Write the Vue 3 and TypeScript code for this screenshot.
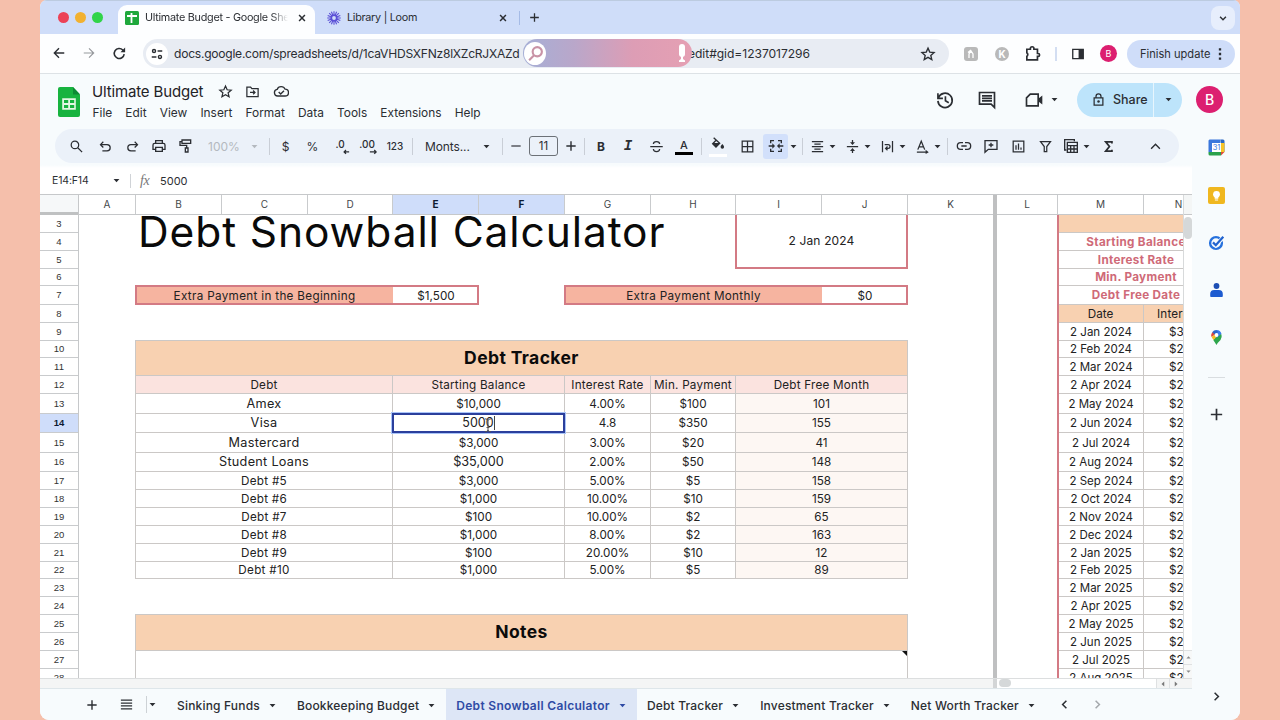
<script setup lang="ts">
import { h, type FunctionalComponent } from 'vue'

type Shape = { d: string; fill?: boolean; w?: number }

const icons: Record<string, Shape[]> = {
  back: [{ d: 'M21 12H4M12 4l-8 8 8 8', w: 2.4 }],
  forward: [{ d: 'M3 12h17M12 4l8 8-8 8', w: 2 }],
  reload: [{ d: 'M19.5 13a8 8 0 1 1-2.2-6.6L20 9', w: 2.5 }, { d: 'M21 2.5V10h-7.5z', fill: true }],
  tune: [{ d: 'M13 7h8M3 17h8', w: 2.6 }, { d: 'M4.300 7a2.600 2.600 0 1 0 5.200 0a2.600 2.600 0 1 0-5.200 0M14.500 17a2.600 2.600 0 1 0 5.200 0a2.600 2.600 0 1 0-5.200 0', w: 2.4 }],
  star: [{ d: 'M12 3.200l2.600 6 6.500.6-4.900 4.300 1.500 6.400L12 17.100l-5.700 3.400 1.500-6.400-4.900-4.300 6.500-.6z' }],
  close: [{ d: 'M5 5l14 14M19 5L5 19', w: 3.6 }],
  plus: [{ d: 'M12 4v16M4 12h16', w: 2.4 }],
  minus: [{ d: 'M4 12h16' }],
  down: [{ d: 'M5 9l7 7 7-7', w: 3.4 }],
  up: [{ d: 'M5 15.500l7-7 7 7', w: 2.2 }],
  left: [{ d: 'M15.500 5l-7 7 7 7', w: 2.8 }],
  right: [{ d: 'M8.500 5l7 7-7 7', w: 2.8 }],
  caret: [{ d: 'M2 7h20L12 18z', fill: true }],
  caretUp: [{ d: 'M2 17h20L12 6z', fill: true }],
  caretLeft: [{ d: 'M17 2v20L6 12z', fill: true }],
  caretRight: [{ d: 'M7 2v20l11-10z', fill: true }],
  puzzle: [{ d: 'M4 6h5V5a2.500 2.500 0 0 1 5 0v1h5v6h1a2 2 0 0 1 0 4h-1v5H4v-5a3 3 0 0 0 0-5z', w: 2.4 }],
  panel: [{ d: 'M3 4h18v16H3z', w: 2.3 }, { d: 'M13 4h8v16h-8z', fill: true }],
  more: [{ d: 'M10 2h4v4h-4zM10 10h4v4h-4zM10 18h4v4h-4z', fill: true }],
  move: [{ d: 'M3 5h6l2 2.500h10V20H3zM8 13.500h8M13 10.500l3 3-3 3' }],
  cloud: [{ d: 'M7 19.500a5 5 0 0 1-.8-9.900 6.500 6.500 0 0 1 12-.3 5 5 0 0 1-.2 10.200zM8.500 13.500l3 3 5-5' }],
  history: [{ d: 'M4.200 9A8.600 8.600 0 1 1 3.500 13M3.500 4v6h6M12.500 7.500V13l4 2.400' }],
  chat: [{ d: 'M3 3h18v18l-4-4H3zM6 7h12M6 10h12M6 13h12' }],
  video: [{ d: 'M7.500 5H17v14H3V9.500z' }, { d: 'M17 10.500l5-4v11l-5-4z', fill: true }],
  lock: [{ d: 'M5 9.500h14V21H5zM8 9.500V7a4 4 0 0 1 8 0v2.500' }, { d: 'M10 15.200a2 2 0 1 0 4 0a2 2 0 1 0-4 0', fill: true }],
  search: [{ d: 'M3.500 9.500a6 6 0 1 0 12 0a6 6 0 1 0-12 0M14 14l7 7' }],
  undo: [{ d: 'M8.500 4.500L4 9l4.500 4.500M4 9h10.500a5 5 0 0 1 0 10H7' }],
  redo: [{ d: 'M15.500 4.500L20 9l-4.500 4.500M20 9H9.500a5 5 0 0 0 0 10H17' }],
  print: [{ d: 'M7 8V4h10v4M6.500 17H3v-6.500Q3 8 5.500 8h13Q21 8 21 10.500V17h-3.500M7 14h10v6H7z' }],
  paint: [{ d: 'M6 3h13v5H6zM6 5.500H3V11h10v4M11 15h4v6h-4z' }],
  decLess: [{ d: 'M21 19h-8M16 16l-3 3 3 3' }],
  decMore: [{ d: 'M11 19h10M18 16l3 3-3 3' }],
  strike: [{ d: 'M2 12h20M17 8c0-3-2-4-5-4s-5 1.500-5 4M7 16c0 3 2 4 5 4s5-1.500 5-4' }],
  fill: [{ d: 'M5.500 2.500l9 8.500-5.500 5.500L4 11.500l5.500-5.500M4 11.500h10' }, { d: 'M5 11.500h9L9 16.500zM18.500 12c2 2.600 2.600 3.400 2.600 4.500a2.600 2.600 0 0 1-5.200 0c0-1.100.6-1.900 2.600-4.500z', fill: true }],
  borders: [{ d: 'M3.500 3.500h17v17h-17zM12 3.500v17M3.500 12h17' }],
  merge: [{ d: 'M9 4H4v4M15 4h5v4M9 20H4v-4M15 20h5v-4M1 12h7M23 12h-7' }, { d: 'M6.500 8l4 4-4 4zM17.500 8l-4 4 4 4z', fill: true }],
  align: [{ d: 'M3 4h18M7 8h10M3 12h18M7 16h10M3 20h18' }],
  valign: [{ d: 'M3 12h18M12 1.500v5M12 22.500v-5' }, { d: 'M8 5h8l-4 4.500zM8 19h8l-4-4.500z', fill: true }],
  wrap: [{ d: 'M4 3v18M20 3v18M7.500 9H13a3 3 0 0 1 0 6h-3.500M12 12l-3 3 3 3' }],
  rotate: [{ d: 'M4.500 17L10 3.500 15.500 17M6.500 12.500h7M3 21h16' }, { d: 'M17 17l5 4-5 3z', fill: true }],
  link: [{ d: 'M10.500 7H7a5 5 0 0 0 0 10h3.500M13.500 7H17a5 5 0 0 1 0 10h-3.500M8 12h8' }],
  comment: [{ d: 'M3 4h18v13H8l-5 4.500zM12 7v7M8.500 10.500h7' }],
  chart: [{ d: 'M3.500 3.500h17v17h-17zM8 10v7M12 7v10M16 13.500V17' }],
  filter: [{ d: 'M4 4h16l-6 8v8h-4v-8z' }],
  table: [{ d: 'M17 5V2.500H2.500V18H5M6.500 6.500h15v15h-15zM6.500 11.500h15M6.500 16.500h15M11.500 11.500v10M16.500 11.500v10' }],
  sigma: [{ d: 'M17.500 7V4.500h-10l6 7.500-6 7.500h10V17', w: 2.8 }],
  menu: [{ d: 'M3 5h18M3 9.700h18M3 14.300h18M3 19h18' }],
  mag: [{ d: 'M8 9.500a6.500 6.500 0 1 0 13 0a6.500 6.500 0 1 0-13 0M10 14.500L3 21.500', w: 3 }],
}

const Icon: FunctionalComponent<{ n: string; s?: number }> = (p) =>
  h(
    'svg',
    { class: 'ic', width: p.s ?? 16, height: p.s ?? 16, viewBox: '0 0 24 24', fill: 'none' },
    (icons[p.n] ?? []).map((s) =>
      h('path', { d: s.d, fill: s.fill ? 'currentColor' : 'none', stroke: s.fill ? 'none' : 'currentColor', 'stroke-width': s.w ?? 2 }),
    ),
  )
Icon.props = ['n', 's']

const menus = ['File', 'Edit', 'View', 'Insert', 'Format', 'Data', 'Tools', 'Extensions', 'Help']

type Tool = { k: 'i' | 't' | 'd' | 'dec'; n: string; w: number; g: number; s?: number; c?: string }
const i = (n: string, g: number, w = 18, s = 15, c = ''): Tool => ({ k: 'i', n, w, g, s, c })
const t = (n: string, g: number, w: number, c = ''): Tool => ({ k: 't', n, w, g, c })
const d = (g: number): Tool => ({ k: 'd', n: '', w: 1, g })
const caret = (g: number, c = ''): Tool => i('caret', g, 8, 7, c)
const tools: Tool[] = [
  i('search', 12), i('undo', 11), i('redo', 9), i('print', 9, 18, 16), i('paint', 9, 18, 16),
  t('100%', 12, 34, 'dim'), caret(9, 'dim'), d(11),
  t('$', 10, 11), t('%', 14, 15), { k: 'dec', n: '.0', w: 18, g: 11, c: 'decLess' }, { k: 'dec', n: '.00', w: 18, g: 9, c: 'decMore' }, t('123', 10, 18, 'small'), d(8),
  t('Monts...', 12, 46, 'font'), caret(11), d(12),
  i('minus', 6, 14, 14), t('11', 6, 29, 'box'), i('plus', 6, 14, 14), d(6),
  t('B', 7, 18, 'bold'), t('I', 9, 18, 'italic'), i('strike', 10), t('A', 10, 18, 'color'), d(8),
  i('fill', 7, 18, 16, 'fill'), i('borders', 11), i('merge', 7, 25, 16, 'on'), caret(1), d(5),
  i('align', 5), caret(2), i('valign', 7), caret(2), i('wrap', 7), caret(2), i('rotate', 7), caret(2), d(6),
  i('link', 7, 18, 16), i('comment', 9, 18, 16), i('chart', 9), i('filter', 9), i('table', 8, 18, 16), caret(2), i('sigma', 9), i('up', 29, 18, 15),
]

const cols = [
  { n: 'A', w: 57 }, { n: 'B', w: 86 }, { n: 'C', w: 86 }, { n: 'D', w: 85 }, { n: 'E', w: 86 }, { n: 'F', w: 86 },
  { n: 'G', w: 86 }, { n: 'H', w: 85 }, { n: 'I', w: 86 }, { n: 'J', w: 86 }, { n: 'K', w: 85 },
]
const rightCols = [{ n: 'L', w: 61 }, { n: 'M', w: 86 }, { n: 'N', w: 70 }]
const heights = [18, 18, 18, 17, 19, 18, 18, 17, 18, 18, 20, 19, 20, 19, 18, 18, 18, 18, 18, 17, 18, 18, 18, 18, 18, 18]
const rowTracks = heights.map((x) => x + 'px').join(' ')
const tracks = (list: { w: number }[]) => list.map((c) => c.w + 'px').join(' ')

// Row numbers are the sheet's own (first visible row is 3), columns are 1-based from A.
type Cell = { r: number; c: number; t: string; k: string; cs?: number; rs?: number }
const area = (x: Cell) => ({ gridArea: `${x.r - 2} / ${x.c} / span ${x.rs ?? 1} / span ${x.cs ?? 1}` })

const debts: [string, string, string, string, string][] = [
  ['Amex', '$10,000', '4.00%', '$100', '101'],
  ['Visa', '5000', '4.8', '$350', '155'],
  ['Mastercard', '$3,000', '3.00%', '$20', '41'],
  ['Student Loans', '$35,000', '2.00%', '$50', '148'],
  ['Debt #5', '$3,000', '5.00%', '$5', '158'],
  ['Debt #6', '$1,000', '10.00%', '$10', '159'],
  ['Debt #7', '$100', '10.00%', '$2', '65'],
  ['Debt #8', '$1,000', '8.00%', '$2', '163'],
  ['Debt #9', '$100', '20.00%', '$10', '12'],
  ['Debt #10', '$1,000', '5.00%', '$5', '89'],
]
const cells: Cell[] = [
  { r: 3, c: 2, rs: 3, cs: 7, t: 'Debt Snowball Calculator', k: 'title' },
  { r: 3, c: 9, rs: 3, cs: 2, t: '2 Jan 2024', k: 'today' },
  { r: 7, c: 2, cs: 3, t: 'Extra Payment in the Beginning', k: 'extra' },
  { r: 7, c: 5, t: '$1,500', k: 'amount' },
  { r: 7, c: 7, cs: 3, t: 'Extra Payment Monthly', k: 'extra' },
  { r: 7, c: 10, t: '$0', k: 'amount' },
  { r: 10, c: 2, rs: 2, cs: 9, t: 'Debt Tracker', k: 'line head' },
  { r: 12, c: 2, cs: 3, t: 'Debt', k: 'line sub' },
  { r: 12, c: 5, cs: 2, t: 'Starting Balance', k: 'line sub' },
  { r: 12, c: 7, t: 'Interest Rate', k: 'line sub' },
  { r: 12, c: 8, t: 'Min. Payment', k: 'line sub' },
  { r: 12, c: 9, cs: 2, t: 'Debt Free Month', k: 'line sub' },
  ...debts.flatMap((x, n): Cell[] => [
    { r: 13 + n, c: 2, cs: 3, t: x[0], k: n < 4 ? 'line name big' : 'line name' },
    { r: 13 + n, c: 5, cs: 2, t: x[1], k: n === 1 ? 'line edit' : n === 3 ? 'line big' : 'line' },
    { r: 13 + n, c: 7, t: x[2], k: 'line' },
    { r: 13 + n, c: 8, t: x[3], k: 'line' },
    { r: 13 + n, c: 9, cs: 2, t: x[4], k: 'line tint' },
  ]),
  { r: 25, c: 2, rs: 2, cs: 9, t: 'Notes', k: 'line head' },
  { r: 27, c: 2, rs: 2, cs: 9, t: '', k: 'line note' },
]

const months = ['Jan 2024', 'Feb 2024', 'Mar 2024', 'Apr 2024', 'May 2024', 'Jun 2024', 'Jul 2024', 'Aug 2024', 'Sep 2024', 'Oct 2024', 'Nov 2024', 'Dec 2024', 'Jan 2025', 'Feb 2025', 'Mar 2025', 'Apr 2025', 'May 2025', 'Jun 2025', 'Jul 2025', 'Aug 2025']
const rightCells: Cell[] = [
  { r: 3, c: 2, cs: 2, t: '', k: 'line peach' },
  ...['Starting Balance', 'Interest Rate', 'Min. Payment', 'Debt Free Date'].map((x, n): Cell => ({ r: 4 + n, c: 2, cs: 2, t: x, k: 'line rose' })),
  { r: 8, c: 2, t: 'Date', k: 'line peach' },
  { r: 8, c: 3, t: 'Interest', k: 'line peach inter' },
  ...months.flatMap((m, n): Cell[] => [
    { r: 9 + n, c: 2, t: '2 ' + m, k: 'line date' },
    { r: 9 + n, c: 3, t: n === 0 ? '$3' : '$2', k: 'line cash' },
  ]),
]

const sheets = ['Sinking Funds', 'Bookkeeping Budget', 'Debt Snowball Calculator', 'Debt Tracker', 'Investment Tracker', 'Net Worth Tracker']
</script>

<template>
  <div class="stage">
    <div class="window">
      <div class="tabstrip">
        <div class="lights"><span class="red" /><span class="yellow" /><span class="green" /></div>
        <div class="tab active">
          <svg width="14" height="14" viewBox="0 0 14 14"><rect width="14" height="14" rx="1.500" fill="#1fa83c" /><path d="M2 5h10M6.500 2v10" stroke="#fff" stroke-width="1.800" /></svg>
          <span class="tabname fade">Ultimate Budget - Google She</span>
          <Icon n="close" :s="10" />
        </div>
        <div class="tab idle">
          <svg width="14" height="14" viewBox="-7 -7 14 14" stroke="#5b50d6" stroke-width="1.500" fill="none">
            <circle r="2.600" stroke-width="1.600" /><path d="M0-6.800V6.800M-6.800 0H6.800M-4.800-4.800L4.800 4.800M-4.800 4.800L4.800-4.800M-2.600-6.300L2.600 6.300M-6.300-2.600L6.300 2.600M-2.600 6.300L2.600-6.300M-6.300 2.600L6.300-2.600" stroke-width="1.100" /><circle r="1.900" fill="#cfddf9" stroke="none" />
          </svg>
          <span class="tabname loom">Library | Loom</span>
          <Icon n="close" :s="10" />
        </div>
        <span class="tabsep" />
        <Icon n="plus" :s="13" />
        <span class="tabmenu"><Icon n="down" :s="10" /></span>
      </div>

      <div class="address">
        <div class="nav"><Icon n="back" :s="14" /><Icon n="forward" :s="14" class="off" /><Icon n="reload" :s="15" /></div>
        <div class="omni">
          <span class="tune"><Icon n="tune" :s="14" /></span>
          <span class="url">docs.google.com/spreadsheets/d/1caVHDSXFNz8lXZcRJXAZd</span>
          <span class="rest">edit#gid=1237017296</span>
          <Icon n="star" :s="16" />
          <div class="pill">
            <span class="lens"><Icon n="mag" :s="17" /></span>
            <svg class="mic" width="8" height="18" viewBox="0 0 8 18" fill="#fff"><rect x="1" width="6" height="13" rx="3" /><path d="M3 12h2v3l2 1.500V18H1v-1.500L3 15z" /></svg>
          </div>
        </div>
        <div class="exts">
          <span class="ext sq"><svg width="10" height="10" viewBox="0 0 10 10"><path d="M3 9V5L5 2l2 3v4M2 3.500L5 1" stroke="#fff" stroke-width="1.300" fill="none" /></svg></span>
          <span class="ext rd">K</span>
          <Icon n="puzzle" :s="17" />
          <span class="extsep" />
          <Icon n="panel" :s="14" />
          <span class="me small">B</span>
        </div>
        <div class="finish"><span>Finish update</span><Icon n="more" :s="14" /></div>
      </div>

      <div class="docs">
        <svg class="logo" width="22" height="30" viewBox="0 0 22 30"><path d="M2 0h13l7 7.500V28q0 2-2 2H2q-2 0-2-2V2q0-2 2-2z" fill="#17b33f" /><path d="M15 0l7 7.500h-7z" fill="#0c8a34" /><path d="M4.200 11.200h13.600v11.600H4.200z" fill="#e3f7e3" /><path d="M6 13h4.200v3H6zM12 13h4.200v3H12zM6 18h4.200v3H6zM12 18h4.200v3H12z" fill="#17b33f" /></svg>
        <div class="names">
          <div class="titleRow"><span class="doc">Ultimate Budget</span><Icon n="star" :s="15" /><Icon n="move" :s="15" /><Icon n="cloud" :s="16" /></div>
          <div class="menus"><span v-for="m in menus" :key="m">{{ m }}</span></div>
        </div>
        <div class="actions">
          <Icon n="history" :s="20" /><Icon n="chat" :s="20" /><Icon n="video" :s="20" /><Icon n="caret" :s="7" />
          <div class="share"><div class="shareMain"><Icon n="lock" :s="15" /><span>Share</span></div><div class="shareMore"><Icon n="caret" :s="7" /></div></div>
          <span class="me">B</span>
        </div>
      </div>

      <div class="body">
        <main class="main">
          <div class="toolbar">
            <span v-for="(x, n) in tools" :key="n" class="tool" :class="[x.k, x.c]" :style="{ width: x.w + 'px', marginLeft: x.g + 'px' }">
              <Icon v-if="x.k === 'i'" :n="x.n" :s="x.s" />
              <template v-else>{{ x.n }}</template>
              <Icon v-if="x.k === 'dec'" :n="x.c ?? ''" :s="15" class="arrow" />
            </span>
          </div>

          <div class="formula">
            <span class="ref">E14:F14</span><Icon n="caret" :s="7" /><span class="fsep" /><span class="fx">fx</span><span>5000</span>
          </div>

          <div class="sheet">
            <div class="rows">
              <div class="corner" />
              <div class="nums" :style="{ gridTemplateRows: rowTracks }">
                <span v-for="(_, n) in heights" :key="n" :class="{ sel: n === 11 }">{{ n + 3 }}</span>
              </div>
            </div>
            <div class="pane left">
              <div class="heads" :style="{ gridTemplateColumns: tracks(cols) }"><span v-for="c in cols" :key="c.n" :class="{ sel: c.n === 'E' || c.n === 'F' }">{{ c.n }}</span></div>
              <div class="grid" :style="{ gridTemplateColumns: tracks(cols), gridTemplateRows: rowTracks }">
                <div v-for="(x, n) in cells" :key="n" class="cell" :class="x.k" :style="area(x)">
                  <span>{{ x.t }}</span>
                  <svg v-if="x.k.includes('edit')" class="ibeam" width="8" height="15" viewBox="0 0 8 15" fill="none" stroke="#555" stroke-width="1"><path d="M1 .8q3 0 3 2v9q0 2-3 2M7 .8q-3 0-3 2M7 13.800q-3 0-3-2M2.500 9.500h3" /></svg>
                </div>
                <div class="ring ringBegin" /><div class="ring ringMonthly" />
              </div>
            </div>
            <div class="freeze" />
            <div class="pane right">
              <div class="heads" :style="{ gridTemplateColumns: tracks(rightCols) }"><span v-for="c in rightCols" :key="c.n">{{ c.n }}</span></div>
              <div class="grid" :style="{ gridTemplateColumns: tracks(rightCols), gridTemplateRows: rowTracks }">
                <div v-for="(x, n) in rightCells" :key="n" class="cell" :class="x.k" :style="area(x)"><span>{{ x.t }}</span></div>
                <div class="redline" />
              </div>
            </div>
            <div class="vscroll"><div class="vtop" /><div class="thumb" /><div class="vbtns"><span><Icon n="caretUp" :s="5" /></span><span><Icon n="caret" :s="5" /></span></div></div>
          </div>
          <div class="hscroll"><div class="hleft" /><div class="hfreeze" /><div class="htrack"><span class="hthumb" /></div><span class="hbtn"><Icon n="caretLeft" :s="6" /></span><span class="hbtn"><Icon n="caretRight" :s="6" /></span><span class="hend" /></div>
          <div class="sheets">
            <Icon n="plus" :s="14" class="add" /><Icon n="menu" :s="15" class="all" /><span class="ssep" /><Icon n="caret" :s="7" class="prev" />
            <div v-for="(s, n) in sheets" :key="s" class="stab" :class="{ cur: n === 2 }"><span>{{ s }}</span><Icon n="caret" :s="7" /></div>
            <Icon n="left" :s="13" class="go" /><Icon n="right" :s="13" class="go dimgo" />
          </div>
        </main>

        <aside class="side">
          <svg width="17" height="17" viewBox="0 0 17 17"><path d="M1.500.5h11V4H4v9H.5V1.500z" fill="#3a77dc" /><path d="M12.500.5h2.500q1.500 0 1.500 1.500v11h-3.500V4z" fill="#2867c4" /><path d="M13 4h3.500v9H13z" fill="#f7c325" /><path d="M.5 13H13v3.500H2Q.5 16.500.5 15z" fill="#2ba24c" /><path d="M13 13h3.500L13 16.500z" fill="#dc4b3e" /><path d="M4 4h9v9H4z" fill="#fff" /><text x="8.500" y="11.300" text-anchor="middle" font-size="7.500" fill="#3a77dc">31</text></svg>
          <svg width="17" height="17" viewBox="0 0 17 17"><rect width="17" height="17" rx="2" fill="#f0b71f" /><circle cx="8.500" cy="7.300" r="3.400" fill="#fff" /><path d="M6.700 9.500h3.600v2.300H6.700zM6.900 12.400h3.200v1H6.900z" fill="#fff" /></svg>
          <svg width="17" height="17" viewBox="0 0 17 17" fill="none"><circle cx="8" cy="9" r="5.900" stroke="#2671dd" stroke-width="2.400" /><path d="M5 8.600l2.800 2.800L15.500 3" stroke="#f7fbfd" stroke-width="4" /><path d="M5 8.400l2.800 2.800L15.300 2.800" stroke="#2163cf" stroke-width="2.300" /></svg>
          <svg width="17" height="17" viewBox="0 0 17 17"><circle cx="8.500" cy="4" r="2.900" fill="#1c4eb4" /><path d="M3 15q-.8 0-.8-1v-2q0-4 4-4h4.600q4 0 4 4v2q0 1-.8 1z" fill="#1d5bd0" /></svg>
          <svg width="17" height="17" viewBox="0 0 17 17"><path d="M8.500 16L5.300 11 11 4l2.500 1.500q.8 3-1 5.500Q9.300 14 8.500 16z" fill="#2ea64c" /><path d="M8.500 1a5.200 5.200 0 0 1 5 3.800L8.500 9z" fill="#3b7ded" /><path d="M4.200 3.200A5.200 5.200 0 0 1 8.500 1L10 3 6 7z" fill="#2d65c9" /><path d="M4.200 3.200Q2.600 5.500 3.600 8L7 5.500z" fill="#e0483b" /><path d="M3.600 8l1.800 3L10 6.500 7 5.500z" fill="#f5bd22" /><circle cx="8.500" cy="6" r="1.900" fill="#fff" /></svg>
          <span class="rule" />
          <Icon n="plus" :s="17" />
          <Icon n="right" :s="13" class="collapse" />
        </aside>
      </div>
    </div>
  </div>
</template>

<style>
html, body { margin: 0; background: #f5bfab; overflow: hidden; }
</style>

<style scoped>
* { box-sizing: border-box; }
.stage { width: 1280px; height: 720px; padding: 0 40px; background: #f5bfab; font-family: Inter, "Liberation Sans", sans-serif; color: #2b2e33; overflow: hidden; }
.window { width: 1200px; height: 720px; background: #f7fbfd; border-radius: 7px 7px 9px 9px; overflow: hidden; display: flex; flex-direction: column; white-space: nowrap; }
.ic { display: block; flex: none; }

.tabstrip { height: 34px; flex: none; display: flex; align-items: center; background: #cfddf9; border-top: 1px solid #bccbe0; }
.lights { display: flex; gap: 6px; padding-left: 17.500px; width: 78px; flex: none; }
.lights span { width: 11px; height: 11px; border-radius: 50%; }
.red { background: #ec4257; }
.yellow { background: #f2b130; }
.green { background: #31d449; }
.tab { display: flex; align-items: center; height: 29px; font-size: 10.800px; align-self: flex-end; padding-bottom: 4px; }
.active { width: 197px; background: #fdfeff; border-radius: 9px 9px 0 0; padding-left: 7px; }
.tabname { margin-left: 6px; letter-spacing: -0.270px; }
.fade { width: 143px; overflow: hidden; margin-right: 8.500px; -webkit-mask-image: linear-gradient(90deg, #000 88%, transparent); mask-image: linear-gradient(90deg, #000 88%, transparent); }
.idle { width: 204px; padding-left: 12px; }
.loom { width: 151px; }
.tabsep { width: 1px; height: 14px; background: #a5bbe6; margin-right: 8px; }
.tabmenu { margin-left: auto; margin-right: 5px; width: 24px; height: 24px; border-radius: 8px; background: #e7eefc; display: grid; place-items: center; }

.address { height: 40px; flex: none; display: flex; align-items: center; background: #fdfeff; border-bottom: 1px solid #dde2e6; }
.nav { display: flex; gap: 16px; width: 103px; padding-left: 12px; flex: none; }
.off { color: #96999d; }
.omni { position: relative; width: 806px; height: 29px; border-radius: 15px; background: #e8ecf3; display: flex; align-items: center; font-size: 12.100px; flex: none; }
.tune { width: 22px; height: 22px; margin-left: 3px; border-radius: 50%; background: #fff; display: grid; place-items: center; }
.url { margin-left: 6px; width: 514px; letter-spacing: -0.260px; }
.rest { width: 232px; letter-spacing: -0.050px; }
.pill { position: absolute; left: 380px; top: 0; width: 169px; height: 28px; border-radius: 14px; background: linear-gradient(90deg, #a6afd6, #b9a7ca 30%, #dd9db5 65%, #e5a0b3); display: flex; align-items: center; justify-content: space-between; padding: 0 6px 0 1px; }
.lens { width: 22px; height: 23px; border-radius: 50%; background: #fff; color: #c993a6; display: grid; place-items: center; }
.exts { display: flex; align-items: center; margin-left: 15px; width: 163px; flex: none; }
.ext { width: 14px; height: 14px; background: #b9b9b9; display: grid; place-items: center; color: #fff; font-size: 10px; font-weight: 700; }
.sq { border-radius: 3px; margin-right: 17px; }
.rd { border-radius: 50%; margin-right: 15px; }
.extsep { width: 2px; height: 14px; background: #d3def2; margin: 0 14px; }
.me { width: 27px; height: 27px; border-radius: 50%; background: #dc1f70; color: #fff; display: grid; place-items: center; font-size: 14px; font-weight: 500; }
.me.small { width: 17px; height: 17px; font-size: 9px; font-weight: 400; margin-left: 15px; }
.finish { width: 108px; height: 28px; margin-top: 1px; border-radius: 14px; background: #cfddf9; display: flex; align-items: center; padding-left: 13px; font-size: 11.100px; gap: 3px; }

.docs { height: 55px; flex: none; display: flex; background: #f7fbfd; }
.logo { margin: 13px 0 0 18px; flex: none; }
.names { margin-left: 12px; padding-top: 7px; flex: 1; }
.titleRow { display: flex; align-items: center; height: 20px; }
.doc { font-size: 15px; width: 111px; margin-right: 15px; letter-spacing: -0.150px; color: #1f2226; }
.titleRow .ic { margin-right: 12px; }
.titleRow .ic:nth-child(3) { margin-right: 13px; }
.menus { display: flex; gap: 13.150px; font-size: 11.900px; height: 22px; align-items: center; padding-left: 0.500px; }
.actions { display: flex; align-items: center; height: 51px; padding-right: 17px; }
.actions > .ic:nth-child(1) { margin-right: 22px; }
.actions > .ic:nth-child(2) { margin-right: 27px; }
.actions > .ic:nth-child(3) { margin-right: 7px; }
.share { display: flex; height: 34px; margin: 0 14px 0 19px; border-radius: 17px; overflow: hidden; font-size: 12.500px; font-weight: 500; }
.shareMain { width: 77px; background: #bde4fb; display: flex; align-items: center; padding-left: 14px; gap: 7px; border-right: 1px solid #e7f5fd; }
.shareMore { width: 28px; background: #bde4fb; display: grid; place-items: center; }

.body { display: flex; flex: 1; min-height: 0; }
.main { width: 1152px; flex: none; display: flex; flex-direction: column; }
.toolbar { height: 34px; width: 1124px; margin-left: 15px; border-radius: 17px; background: #ebf1f9; display: flex; align-items: center; flex: none; }
.tool { display: flex; align-items: center; justify-content: center; flex: none; font-size: 12px; height: 24px; }
.tool.d { height: 17px; background: #c9ced6; }
.dim { color: #b4b9bf; }
.tool.small { font-size: 10px; font-weight: 500; }
.font { justify-content: flex-start; letter-spacing: -0.100px; }
.box { border: 1px solid #6c7177; border-radius: 3px; height: 20px; font-size: 11.500px; }
.bold { font-weight: 700; }
.italic { font-family: "Liberation Mono", monospace; font-style: italic; font-weight: 700; font-size: 14px; }
.tool.color { border-bottom: 3px solid #000; height: 17px; font-size: 11px; font-weight: 500; }
.tool.dec { position: relative; font-size: 10px; font-weight: 500; align-items: flex-start; padding-top: 4px; line-height: 12px; }
.arrow { position: absolute; right: -2px; bottom: 3px; }
.fill { border-bottom: 3px solid #fff; height: 22px; padding-bottom: 2px; }
.on { background: #d2e0fb; border-radius: 3px; height: 25px; }
.formula { height: 31px; display: flex; align-items: center; flex: none; background: linear-gradient(#f7fbfd 2px, #fff 5px); font-size: 11px; padding: 4px 0 0 12px; }
.ref { width: 61px; font-size: 10.500px; letter-spacing: -0.150px; }
.fsep { width: 1px; height: 14px; background: #d0d3d7; margin: 0 9px 0 10px; }
.fx { font-family: "Liberation Serif", serif; font-style: italic; font-size: 14px; color: #777; width: 20px; letter-spacing: -0.500px; }

.sheet { height: 484px; flex: none; display: flex; background: #fff; border-top: 1px solid #c6c8ca; overflow: hidden; }
.rows { width: 39px; flex: none; border-right: 1px solid #c6c8ca; }
.corner { height: 20px; background: #f6f8f9; border-bottom: 3px solid #bfc1c2; }
.nums { display: grid; font-size: 9.500px; font-family: "Liberation Sans", Arial, sans-serif; color: #333; }
.nums span { border-bottom: 1px solid #c9cbcd; display: flex; align-items: center; justify-content: center; padding-bottom: 1px; }
.sel { background: #cfddfa; font-weight: 700; color: #0d1a33; }
.pane { flex: none; overflow: hidden; display: flex; flex-direction: column; }
.left { width: 914px; }
.right { width: 186px; }
.heads { display: grid; height: 20px; flex: none; border-bottom: 1px solid #c6c8ca; font-size: 10px; line-height: 12px; color: #44474a; }
.heads span { border-right: 1px solid #c9cbcd; display: flex; align-items: center; justify-content: center; padding-bottom: 2px; }
.left .heads span:last-child { border-right: 0; }
.heads .sel { color: #0d1a33; }
.grid { display: grid; flex: 1; min-height: 0; overflow: hidden; position: relative; }
.cell { display: flex; align-items: center; justify-content: center; font-size: 11.700px; color: #222; min-width: 0; line-height: 16px; overflow: hidden; }
.line { margin: -1px 0 0 -1px; border: 1px solid #cbc8c6; }
.title { justify-content: flex-start; padding: 0 0 20px 2px; font-size: 42.500px; letter-spacing: 0.900px; color: #0a0a0a; font-weight: 400; line-height: 34px; }
.today { border: 2px solid #d37a84; border-top: 0; margin-left: -1px; font-size: 12px; letter-spacing: 0.150px; }
.extra { background: #f6b4a0; letter-spacing: 0.320px; }
.head { background: #f8d1b1; font-size: 17.500px; font-weight: 700; color: #0b0b0b; letter-spacing: 0.400px; padding-bottom: 1px; }
.sub { background: #fbe3df; letter-spacing: 0.220px; }
.name { letter-spacing: 0.280px; }
.big { font-size: 12.700px; }
.tint { background: #fdf7f3; }
.edit { position: relative; border: 2px solid #2b3f9c; outline: 1px solid #a9c4f8; z-index: 3; overflow: visible; background: #fff; font-size: 12.500px; }
.edit span { border-right: 1px solid #444; line-height: 14px; }
.ibeam { position: absolute; left: 90px; top: 3px; }
.note { position: relative; }
.note::after { content: ""; position: absolute; right: 0; top: 0; border-top: 5px solid #111; border-left: 5px solid transparent; }
.ring { border: 2px solid #d37a84; margin: -1px 0 0 -1px; z-index: 2; }
.ringBegin { grid-area: 5 / 2 / span 1 / span 4; }
.ringMonthly { grid-area: 5 / 7 / span 1 / span 4; }
.freeze { width: 4px; background: #bfc0c1; flex: none; }
.peach { background: #f8d1b1; }
.rose { color: #cf6a78; font-weight: 700; font-size: 11.700px; letter-spacing: 0.320px; padding-left: 1px; }
.date { font-size: 11.500px; padding-left: 1px; }
.inter { justify-content: flex-start; padding-left: 13px; letter-spacing: 0.200px; }
.cash { justify-content: flex-start; padding-left: 25px; }
.redline { grid-area: 1 / 2 / span 26 / span 1; border-left: 2px solid #d37a84; margin-left: -1px; z-index: 2; }
.vscroll { width: 9px; border-left: 1px solid #d8dadb; flex: none; display: flex; flex-direction: column; }
.vtop { height: 20px; background: #f4f6f6; border-bottom: 1px solid #c6c8ca; }
.thumb { width: 8px; height: 22px; margin-top: 2px; border-radius: 4px; background: #d5d8d9; }
.vbtns { margin-top: auto; }
.vbtns span { display: grid; place-items: center; height: 14px; border-top: 1px solid #dfe1e2; color: #888; background: #f7f8f8; }

.hscroll { height: 11px; flex: none; display: flex; align-items: stretch; background: #f4f5f5; border-top: 1px solid #dcdedf; border-bottom: 1px solid #dee6ea; }
.hleft { width: 953px; }
.hfreeze { width: 4px; background: #d3d5d6; }
.htrack { width: 159px; background: #fff; }
.hthumb { display: block; width: 12px; height: 8px; margin-left: 2px; border-radius: 4px; background: #d5d8d9; }
.hbtn { width: 13px; border-left: 1px solid #dfe1e2; display: grid; place-items: center; color: #777; }
.sheets { flex: 1; display: flex; align-items: center; font-size: 12px; font-weight: 500; letter-spacing: 0.180px; background: #f7fbfd; width: 1152px; }
.add { margin: 0 20px 0 45px; }
.all { margin-right: 12px; }
.ssep { width: 1px; height: 17px; background: #cdd2d6; margin-right: 2px; }
.prev { margin-right: 11px; }
.stab { height: 31px; display: flex; align-items: center; gap: 9px; padding: 1px 11px 0 10px; }
.cur { background: #dde6f6; color: #2f4ba5; font-weight: 600; letter-spacing: 0.320px; }
.go { margin-left: 12.500px; }
.dimgo { margin-left: 20px; color: #a4a8ac; }

.side { width: 48px; display: flex; flex-direction: column; align-items: center; padding-top: 10px; background: #f7fbfd; }
.side svg:not(.ic) { margin-bottom: 30.600px; flex: none; }
.rule { width: 17px; height: 1px; background: #d9dde0; margin-bottom: 28px; flex: none; }
.collapse { margin-top: auto; margin-bottom: 17px; }
</style>
